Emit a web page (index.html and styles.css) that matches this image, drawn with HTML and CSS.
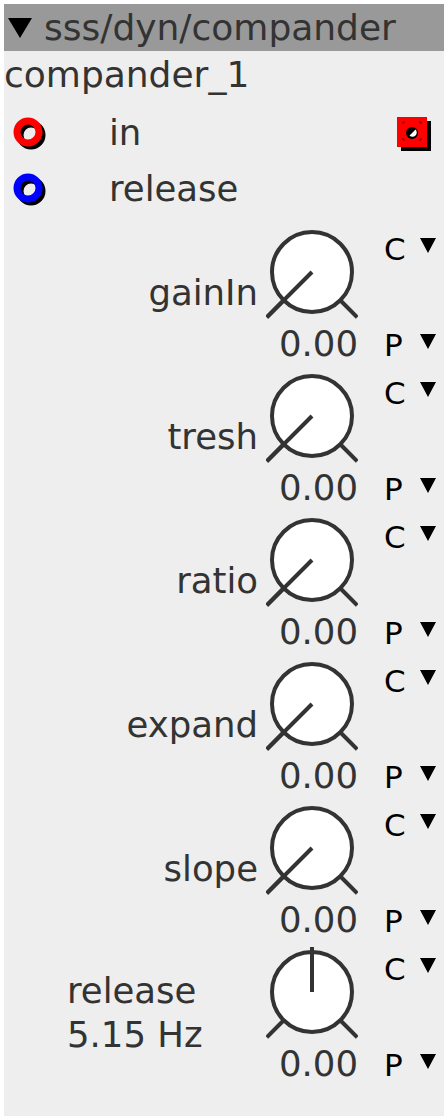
FILE: index.html
```html
<!DOCTYPE html>
<html lang="en">
<head>
    <meta charset="UTF-8">
    <meta name="viewport" content="width=device-width, initial-scale=1.0">
    <title>sss/dyn/compander</title>
    <link rel="stylesheet" href="styles.css">
</head>
<body>

<div class="object">
    <div class="object-head"><span class="fold"></span>sss/dyn/compander</div>
    <div class="instance">compander_1</div>

    <div class="port-row">
        <svg class="inlet" width="36" height="36" viewBox="0 0 36 36">
            <circle cx="21" cy="21" r="11" fill="none" stroke="#000" stroke-width="7"/>
            <circle cx="18" cy="18" r="11" fill="none" stroke="#f00" stroke-width="7"/>
        </svg>
        <span class="port-name">in</span>
        <svg class="outlet" width="38" height="38" viewBox="0 0 38 38">
            <rect x="8" y="8" width="30" height="30" fill="#000"/>
            <rect x="4" y="4" width="30" height="30" fill="#f00"/>
            <circle cx="19" cy="20" r="6" fill="#000"/>
            <path d="M22.5 16.5 A4 4 0 0 1 16.5 22.5 Z" fill="#fff"/>
            <path d="M10 11 v-2 h2 M26 9 h2 v2 M10 25 v2 h2 M26 27 h2 v-2" fill="none" stroke="#600" stroke-width="1"/>
        </svg>
    </div>
    <div class="port-row">
        <svg class="inlet" width="36" height="36" viewBox="0 0 36 36">
            <circle cx="21" cy="21" r="11" fill="none" stroke="#000" stroke-width="7"/>
            <circle cx="18" cy="18" r="11" fill="none" stroke="#00f" stroke-width="7"/>
        </svg>
        <span class="port-name">release</span>
    </div>

    <div class="params" id="params"></div>
</div>

<script>
    // knob rows: label, value shown under the knob, pointer angle in degrees (0 = up)
    const params = [
        { label: "gainIn", value: "0.00", angle: -135 },
        { label: "tresh", value: "0.00", angle: -135 },
        { label: "ratio", value: "0.00", angle: -135 },
        { label: "expand", value: "0.00", angle: -135 },
        { label: "slope", value: "0.00", angle: -135 },
        { label: "release<br>5.15 Hz", value: "0.00", angle: 0, wide: true }
    ];

    function knob(angle) {
        const cx = 46, cy = 45, r = 40;
        const rad = angle * Math.PI / 180;
        const px = cx + Math.sin(rad) * 64;
        const py = cy - Math.cos(rad) * 64;
        const leg = (a, r1, r2) => {
            const t = a * Math.PI / 180;
            return `<line x1="${cx + Math.sin(t) * r1}" y1="${cy - Math.cos(t) * r1}" x2="${cx + Math.sin(t) * r2}" y2="${cy - Math.cos(t) * r2}"/>`;
        };
        return `<svg class="knob" width="92" height="92" viewBox="0 0 92 92">
            <g stroke="#333" stroke-width="4" fill="none">
                <circle cx="${cx}" cy="${cy}" r="${r}" fill="#fff"/>
                ${leg(-135, 41, 64)}
                ${leg(135, 41, 64)}
                <line x1="${cx}" y1="${cy}" x2="${px}" y2="${py}"/>
            </g>
        </svg>`;
    }

    document.getElementById("params").innerHTML = params.map(p => `
        <div class="param">
            <div class="param-label${p.wide ? " wide" : ""}">${p.label}</div>
            ${knob(p.angle)}
            <div class="mode mode-c"><span class="mode-letter">C</span><i class="caret"></i></div>
            <div class="param-value">${p.value}</div>
            <div class="mode mode-p"><span class="mode-letter">P</span><i class="caret"></i></div>
        </div>`).join("");
</script>

</body>
</html>
```

FILE: styles.css
```css
body {
    margin: 0;
    background-color: #fff;
    font-family: 'DejaVu Sans', 'Liberation Sans', sans-serif;
    color: #333;
}
.object {
    margin: 4px;
    width: 440px;
    height: 1112px;
    box-sizing: border-box;
    background-color: #eee;
    padding-bottom: 25px;
}
.object-head {
    display: flex;
    align-items: center;
    height: 47px;
    line-height: 47px;
    font-size: 36px;
    background-color: #999;
    color: #333;
    white-space: nowrap;
}
.fold {
    width: 0;
    height: 0;
    margin-left: 4px;
    margin-right: 12px;
    border-left: 12.5px solid transparent;
    border-right: 12.5px solid transparent;
    border-top: 20px solid #000;
}
.instance {
    height: 53px;
    box-sizing: border-box;
    padding-top: 2px;
    font-size: 36px;
    line-height: 44px;
}
.port-row {
    display: flex;
    align-items: center;
    height: 56px;
    padding-left: 6px;
    padding-right: 13px;
    font-size: 35.5px;
}
.port-name {
    margin-left: 63px;
}
.outlet {
    margin-left: auto;
}
.params {
    margin-top: 11px;
}
.param {
    display: grid;
    grid-template-columns: 262px 92px 86px;
    grid-template-rows: 92px 52px;
    font-size: 35.5px;
}
.param-label {
    grid-row: 1;
    grid-column: 1;
    align-self: end;
    text-align: right;
    padding-right: 8px;
    margin-bottom: 6px;
    line-height: 40px;
}
.param-label.wide {
    align-self: start;
    text-align: left;
    padding-left: 63px;
    padding-right: 0;
    margin-top: 22px;
    margin-bottom: 0;
    line-height: 44px;
}
.knob {
    grid-row: 1;
    grid-column: 2;
    display: block;
}
.param-value {
    grid-row: 2;
    grid-column: 2;
    justify-self: end;
    white-space: nowrap;
    margin-top: 5px;
    line-height: 40px;
}
.mode {
    display: flex;
    align-items: flex-start;
    padding-left: 26px;
    font-size: 31px;
    line-height: 36px;
    color: #000;
}
.mode-letter {
    width: 36px;
}
.mode-c {
    grid-row: 1;
    grid-column: 3;
    margin-top: 4px;
}
.mode-p {
    grid-row: 2;
    grid-column: 3;
    margin-top: 8px;
}
.caret {
    width: 0;
    height: 0;
    margin-top: 7px;
    border-left: 8px solid transparent;
    border-right: 8px solid transparent;
    border-top: 15px solid #000;
}
```
